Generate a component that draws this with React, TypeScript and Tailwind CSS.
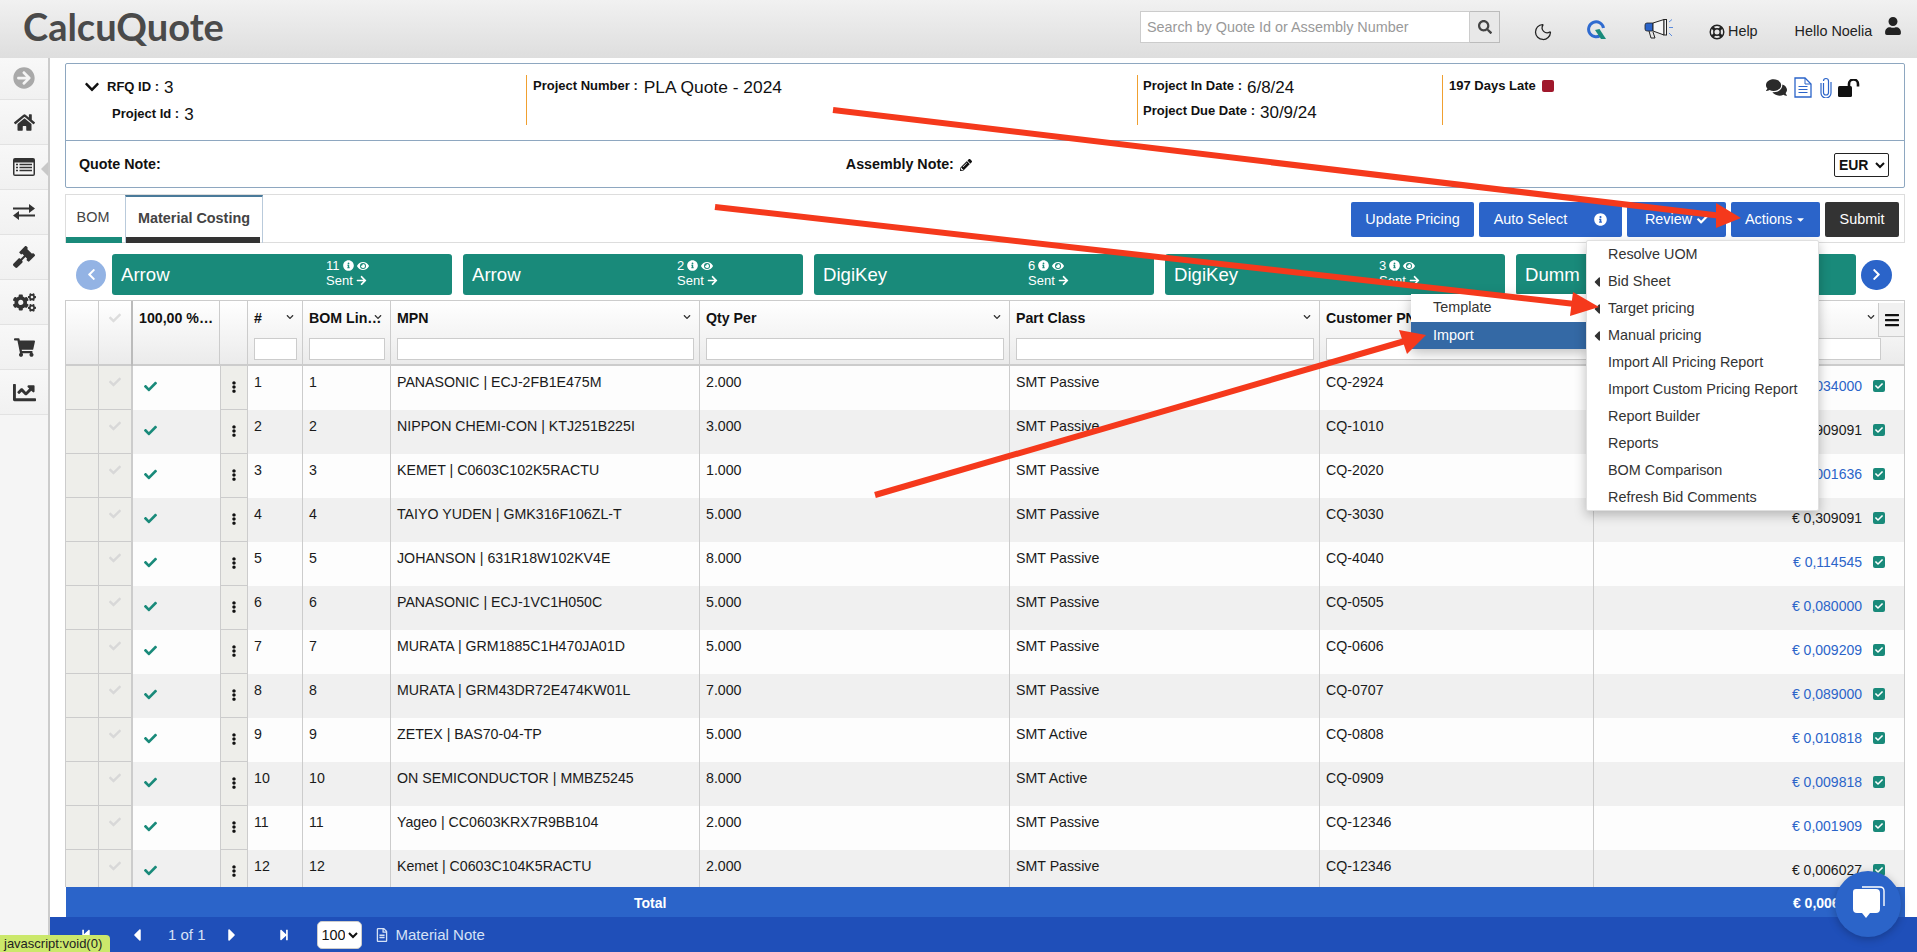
import { Moon } from 'lucide-react';
import {
  FaArrowCircleRight, FaArrowRight, FaBars, FaCaretDown, FaCaretLeft, FaCaretRight, FaChartLine, FaCheck,
  FaChevronDown, FaChevronLeft, FaChevronRight, FaCogs, FaComments, FaEllipsisV, FaEye, FaGavel, FaHome,
  FaInfoCircle, FaPencilAlt, FaRegFileAlt, FaSearch, FaShoppingCart, FaStepBackward, FaStepForward, FaUser,
} from 'react-icons/fa';

const rows = [
  ['PANASONIC | ECJ-2FB1E475M', '2.000', 'SMT Passive', 'CQ-2924', '€ 0,034000', true],
  ['NIPPON CHEMI-CON | KTJ251B225I', '3.000', 'SMT Passive', 'CQ-1010', '€ 0,909091', false],
  ['KEMET | C0603C102K5RACTU', '1.000', 'SMT Passive', 'CQ-2020', '€ 0,001636', true],
  ['TAIYO YUDEN | GMK316F106ZL-T', '5.000', 'SMT Passive', 'CQ-3030', '€ 0,309091', false],
  ['JOHANSON | 631R18W102KV4E', '8.000', 'SMT Passive', 'CQ-4040', '€ 0,114545', true],
  ['PANASONIC | ECJ-1VC1H050C', '5.000', 'SMT Passive', 'CQ-0505', '€ 0,080000', true],
  ['MURATA | GRM1885C1H470JA01D', '5.000', 'SMT Passive', 'CQ-0606', '€ 0,009209', true],
  ['MURATA | GRM43DR72E474KW01L', '7.000', 'SMT Passive', 'CQ-0707', '€ 0,089000', true],
  ['ZETEX | BAS70-04-TP', '5.000', 'SMT Active', 'CQ-0808', '€ 0,010818', true],
  ['ON SEMICONDUCTOR | MMBZ5245', '8.000', 'SMT Active', 'CQ-0909', '€ 0,009818', true],
  ['Yageo | CC0603KRX7R9BB104', '2.000', 'SMT Passive', 'CQ-12346', '€ 0,001909', true],
  ['Kemet | C0603C104K5RACTU', '2.000', 'SMT Passive', 'CQ-12346', '€ 0,006027', false],
] as const;

const cols = 'grid grid-cols-[33px_34px_87px_28px_55px_88px_309px_310px_310px_274px_310px]';

const menuItems: [string, boolean][] = [
  ['Resolve UOM', false],
  ['Bid Sheet', true],
  ['Target pricing', true],
  ['Manual pricing', true],
  ['Import All Pricing Report', false],
  ['Import Custom Pricing Report', false],
  ['Report Builder', false],
  ['Reports', false],
  ['BOM Comparison', false],
  ['Refresh Bid Comments', false],
];

const cards = [
  ['Arrow', '11'],
  ['Arrow', '2'],
  ['DigiKey', '6'],
  ['DigiKey', '3'],
  ['Dumm', ''],
];

function SideItem({ children, h = 'h-[45px]', active }: { children: React.ReactNode; h?: string; active?: boolean }) {
  return (
    <div className={`relative flex items-center justify-center border-b border-[#e2e2e2] bg-gradient-to-b from-[#f8f8f8] to-[#f1f1f1] text-[#333] ${h}`}>
      {children}
      {active && (
        <div className="absolute right-0 top-[17px] border-y-[7px] border-r-[7px] border-y-transparent border-r-[#c8c8c8]" />
      )}
    </div>
  );
}

function HeadCell({ label, filter = true, sort = true }: { label: string; filter?: boolean; sort?: boolean }) {
  return (
    <div className="relative h-[65px] border-r border-[#ccc] pl-[6px] pr-[5px] pt-[8px]">
      <div className="h-[18px] whitespace-nowrap text-[14.2px] font-bold leading-[18px] text-[#111]">{label}</div>
      {sort && <FaChevronDown className="absolute right-[8px] top-[12px] text-[8px] text-[#333]" />}
      {filter && <div className="mt-[11px] h-[22px] border border-[#ccc] bg-white" />}
    </div>
  );
}

function Btn({ children, w, dark }: { children: React.ReactNode; w: string; dark?: boolean }) {
  return (
    <div className={`flex h-[35px] items-center justify-center rounded-[2px] text-[14.4px] text-white ${w} ${dark ? 'bg-[#333]' : 'bg-[#2b64c9]'}`}>
      {children}
    </div>
  );
}

export default function App() {
  return (
    <div className="relative flex h-[952px] w-[1917px] flex-col overflow-hidden bg-white font-['Liberation_Sans',Arial,sans-serif] text-[#222]">
      {/* top bar */}
      <header className="flex h-[58px] shrink-0 items-center bg-gradient-to-b from-[#f1f1f1] to-[#dedede]">
        <div className="ml-[23px] mt-[-6px] w-[210px] font-['Lato',sans-serif] text-[38px] font-bold leading-none text-[#4a4a4a]">CalcuQuote</div>
        <div className="ml-[907px] mt-[-4px] flex h-[32px] w-[330px] items-center border border-[#ccc] bg-white pl-[6px] pt-[2px] text-[14.4px] text-[#999]">
          Search by Quote Id or Assembly Number
        </div>
        <div className="mt-[-4px] flex h-[32px] w-[30px] items-center justify-center border border-l-0 border-[#bbb] bg-[#e8e8e8] text-[14px] text-[#444]">
          <FaSearch />
        </div>
        <Moon className="ml-[33px] mt-[5px] h-[20px] w-[20px] text-[#222]" strokeWidth={1.5} />
        <svg className="ml-[32px] mt-[2px] h-[20px] w-[22px]" viewBox="0 0 22 20">
          <path d="M16.5 14.5 A7.5 7.5 0 1 1 18.5 8" fill="none" stroke="#2f6bd0" strokeWidth="3" />
          <path d="M10 10 L14.5 9 L21 19 L16 19 Z" fill="#198a7a" />
        </svg>
        <svg className="ml-[37px] mt-[1px] h-[22px] w-[29px]" viewBox="0 0 29 22">
          <path d="M1 6 Q1 4 3 4 H9 V12 H3 Q1 12 1 10 Z" fill="#2b64c9" stroke="#222" strokeWidth="0.8" />
          <path d="M9 4 L20 0.5 V16 L9 12 Z" fill="#f6f6f6" stroke="#222" strokeWidth="1" />
          <rect x="20" y="0.5" width="2.5" height="15.5" fill="#f6f6f6" stroke="#222" strokeWidth="1" />
          <path d="M5 12 L7 19 H11 L9 13" fill="none" stroke="#222" strokeWidth="1" />
          <path d="M25 3 L28 0.5 M25 8.5 H29 M25 14 L28 17" stroke="#5b8bdc" strokeWidth="1" />
        </svg>
        <svg className="ml-[36px] mt-[5px] h-[16px] w-[16px]" viewBox="0 0 16 16" fill="none" stroke="#222">
          <circle cx="8" cy="8" r="6.8" strokeWidth="1.4" />
          <circle cx="8" cy="8" r="3.2" strokeWidth="1.4" />
          <path d="M3.2 3.2L5.7 5.7M12.8 3.2L10.3 5.7M3.2 12.8L5.7 10.3M12.8 12.8L10.3 10.3" strokeWidth="3" />
        </svg>
        <span className="ml-[3px] mt-[5px] text-[14.4px] text-[#222]">Help</span>
        <span className="ml-[37px] mt-[5px] text-[14.4px] text-[#222]">Hello Noelia</span>
        <FaUser className="ml-[12px] mt-[-6px] text-[18px] text-[#222]" />
      </header>

      <div className="flex min-h-0 flex-1">
        {/* left rail */}
        <aside className="w-[50px] shrink-0 border-r-2 border-[#ccc] bg-[#f5f5f5]">
          <SideItem h="h-[42px]"><FaArrowCircleRight className="mb-[2px] text-[22px] text-[#a9a9a9]" /></SideItem>
          <SideItem><FaHome className="text-[21px]" /></SideItem>
          <SideItem active>
            <svg className="h-[18px] w-[22px]" viewBox="0 0 22 18">
              <rect width="22" height="18" rx="2" fill="#333" />
              <rect x="1.5" y="4.5" width="19" height="12" fill="#f4f4f4" />
              <path d="M3 6.5H5M3 9.5H5M3 12.5H5M6.5 6.5H19M6.5 9.5H19M6.5 12.5H19" stroke="#333" strokeWidth="1.6" />
            </svg>
          </SideItem>
          <SideItem>
            <svg className="h-[16px] w-[22px]" viewBox="0 0 22 16">
              <path d="M0 4.5H17M5 11.5H22" stroke="#333" strokeWidth="2.2" />
              <path d="M16 0L22 4.5L16 9ZM6 7L0 11.5L6 16Z" fill="#333" />
            </svg>
          </SideItem>
          <SideItem><FaGavel className="text-[22px]" /></SideItem>
          <SideItem><FaCogs className="text-[23px]" /></SideItem>
          <SideItem><FaShoppingCart className="text-[21px]" /></SideItem>
          <SideItem><FaChartLine className="text-[23px]" /></SideItem>
        </aside>

        <div className="flex min-w-0 flex-1 flex-col">
          <main className="min-h-0 flex-1 pl-[15px] pr-[12px] pt-[5px]">
            {/* project summary */}
            <section className="h-[125px] rounded-[2px] border border-[#8ea7c0] text-[#111]">
              <div className="flex h-[77px] border-b border-[#8ea7c0]">
                <div className="w-[460px] pl-[16px] pt-[13px] text-[13px] font-bold">
                  <div className="flex h-[20px] items-center">
                    <FaChevronDown className="ml-[2px] mr-[7px] text-[16px]" />
                    <span>RFQ ID :</span>
                    <span className="ml-[5px] mt-[1px] text-[17px] font-normal">3</span>
                  </div>
                  <div className="ml-[30px] mt-[7px] flex h-[20px] items-center">
                    <span>Project Id :</span>
                    <span className="ml-[5px] mt-[2px] text-[17px] font-normal">3</span>
                  </div>
                </div>
                <div className="mt-[11px] h-[50px] w-[611px] border-l border-[#f0a030] pl-[6px] pt-[1px] text-[13px] font-bold">
                  <div className="flex h-[20px] items-center">
                    <span>Project Number :</span>
                    <span className="ml-[6px] mt-[3px] text-[17.4px] font-normal">PLA Quote - 2024</span>
                  </div>
                </div>
                <div className="mt-[11px] h-[50px] w-[305px] border-l border-[#f0a030] pl-[5px] pt-[1px] text-[13px] font-bold">
                  <div className="flex h-[20px] items-center">
                    <span>Project In Date :</span>
                    <span className="ml-[5px] mt-[3px] text-[17px] font-normal">6/8/24</span>
                  </div>
                  <div className="mt-[5px] flex h-[20px] items-center">
                    <span>Project Due Date :</span>
                    <span className="ml-[5px] mt-[3px] text-[17px] font-normal">30/9/24</span>
                  </div>
                </div>
                <div className="mt-[11px] h-[50px] w-[324px] border-l border-[#f0a030] pl-[6px] pt-[1px] text-[13px] font-bold">
                  <div className="flex h-[20px] items-center">
                    <span>197 Days Late</span>
                    <span className="ml-[6px] h-[12px] w-[12px] rounded-[2px] bg-[#a0182c]" />
                  </div>
                </div>
                <div className="mt-[13px] flex h-[21px] items-center">
                  <FaComments className="text-[21px] text-[#2a2a2a]" />
                  <svg className="ml-[7px] h-[21px] w-[18px]" viewBox="0 0 18 21" fill="none" stroke="#2b64c9">
                    <path d="M1 1H11L17 7V20H1Z" strokeWidth="1.3" />
                    <path d="M11 1V7H17M4.5 9.5H13.5M4.5 12.5H13.5M4.5 15.5H13.5" strokeWidth="1" />
                  </svg>
                  <svg className="ml-[8px] h-[21px] w-[12px]" viewBox="0 0 12 21" fill="none" stroke="#2b64c9" strokeWidth="1.2">
                    <path d="M3.5 6V15.5A2.5 2.5 0 0 0 8.5 15.5V4A2.5 2.5 0 0 0 3.5 4M1 6V16A5 5 0 0 0 11 16V5" />
                  </svg>
                  <svg className="ml-[6px] h-[18px] w-[22px]" viewBox="0 0 22 18">
                    <rect x="0" y="7" width="14" height="11" rx="1.5" fill="#111" />
                    <path d="M11 7V5A4.5 4.5 0 0 1 20 5V7.5" fill="none" stroke="#111" strokeWidth="2.6" />
                  </svg>
                </div>
              </div>
              <div className="flex h-[46px] items-center pt-[1px] text-[14.3px] font-bold">
                <span className="ml-[13px]">Quote Note:</span>
                <span className="ml-[685px]">Assembly Note:</span>
                <FaPencilAlt className="ml-[6px] text-[12px]" />
                <select className="ml-[862px] h-[24px] w-[55px] rounded-[2px] border border-[#222] bg-white text-[14px] font-bold">
                  <option>EUR</option>
                </select>
              </div>
            </section>

            {/* tabs and actions */}
            <section className="mt-[6px] flex h-[49px] items-start border border-[#ddd]">
              <div className="relative h-[48px] w-[59px] pr-[5px] text-center text-[14.4px] leading-[44px] text-[#444]">
                BOM
                <div className="absolute bottom-0 left-0 right-[3px] h-[6px] bg-[#198a7a]" />
              </div>
              <div className="relative h-[48px] w-[138px] border-x border-t-2 border-x-[#b9cadb] border-t-[#4a7a9a] text-center text-[14.4px] font-bold leading-[42px] text-[#444]">
                Material Costing
                <div className="absolute bottom-0 left-0 right-[2px] h-[6px] bg-[#333]" />
              </div>
              <div className="ml-auto mr-[5px] mt-[7px] flex gap-[5px]">
                <Btn w="w-[123px]">Update Pricing</Btn>
                <Btn w="w-[143px]">
                  Auto Select
                  <FaInfoCircle className="ml-[27px] text-[13px]" />
                </Btn>
                <Btn w="w-[99px]">
                  Review
                  <FaCheck className="ml-[5px] text-[11px]" />
                </Btn>
                <Btn w="w-[89px]">
                  Actions
                  <FaCaretDown className="ml-[3px] text-[11px]" />
                </Btn>
                <Btn w="w-[74px]" dark>Submit</Btn>
              </div>
            </section>

            {/* supplier cards */}
            <section className="mt-[11px] flex h-[41px] items-center pl-[11px]">
              <div className="mr-[6px] flex h-[30px] w-[30px] items-center justify-center rounded-full bg-[#93b3e4] text-[13px] text-white">
                <FaChevronLeft />
              </div>
              <div className="flex gap-[11px]">
                {cards.map(([name, count], i) => (
                  <div key={i} className="flex h-[41px] w-[340px] items-center rounded-[3px] bg-[#198a7a] pl-[9px] text-white">
                    <span className="w-[205px] text-[18.6px]">{name}</span>
                    {count && (
                      <div className="mt-[-3px] text-[13px] leading-[15px]">
                        <div className="flex items-center gap-[3px]">
                          {count}
                          <FaInfoCircle className="text-[11px]" />
                          <FaEye className="text-[12px]" />
                        </div>
                        <div className="flex items-center gap-[3px]">
                          Sent
                          <FaArrowRight className="text-[11px]" />
                        </div>
                      </div>
                    )}
                  </div>
                ))}
              </div>
              <div className="ml-[5px] flex h-[30px] w-[31px] items-center justify-center rounded-full bg-[#2b64c9] text-[13px] text-white">
                <FaChevronRight />
              </div>
            </section>

            {/* grid */}
            <section className="mt-[5px] h-[587px] overflow-hidden border-x border-[#ccc]">
              <div className={`${cols} h-[66px] border-b-2 border-t border-[#ccc] bg-gradient-to-b from-white to-[#ebebeb]`}>
                <div className="border-r border-[#ccc]" />
                <div className="flex justify-center border-r-2 border-[#bbb] pt-[11px] text-[12px] text-[#ddd]"><FaCheck /></div>
                <HeadCell label="100,00 %…" filter={false} sort={false} />
                <div className="border-r border-[#ccc]" />
                <HeadCell label="#" />
                <HeadCell label="BOM Lin…" />
                <HeadCell label="MPN" />
                <HeadCell label="Qty Per" />
                <HeadCell label="Part Class" />
                <HeadCell label="Customer PN" />
                <div className="relative pl-[6px] pr-[23px] pt-[37px]">
                  <div className="h-[22px] border border-[#ccc] bg-white" />
                  <FaChevronDown className="absolute right-[29px] top-[12px] text-[8px] text-[#333]" />
                  <div className="absolute right-0 top-[2px] flex h-[34px] w-[26px] items-center justify-center border-b border-l border-[#ccc] bg-[#f1f1f1] text-[16px] text-[#111]">
                    <FaBars />
                  </div>
                </div>
              </div>
              {rows.map((r, i) => (
                <div key={i} className={`${cols} h-[44px] text-[14.2px] leading-[17px] text-[#1a1a1a] ${i % 2 ? 'bg-[#f0f0f0]' : 'bg-[#fdfdfd]'}`}>
                  <div className="border-b border-r border-[#ccc] bg-[#eeeeea]" />
                  <div className="flex justify-center border-b border-r-2 border-[#ccc] bg-[#eeeeea] pt-[10px] text-[12px] text-[#d8d8d8]"><FaCheck /></div>
                  <div className="pl-[11px] pt-[14px] text-[13px] text-[#198a7a]"><FaCheck /></div>
                  <div className="flex justify-center border-x border-b border-[#ccc] bg-[#eeeeea] pt-[15px] text-[12px] text-[#111]"><FaEllipsisV /></div>
                  <div className="border-r border-[#ccc] pl-[6px] pt-[8px]">{i + 1}</div>
                  <div className="border-r border-[#ccc] pl-[6px] pt-[8px]">{i + 1}</div>
                  <div className="truncate border-r border-[#ccc] pl-[6px] pt-[8px]">{r[0]}</div>
                  <div className="border-r border-[#ccc] pl-[6px] pt-[8px]">{r[1]}</div>
                  <div className="border-r border-[#ccc] pl-[6px] pt-[8px]">{r[2]}</div>
                  <div className="border-r border-[#ccc] pl-[6px] pt-[8px]">{r[3]}</div>
                  <div className="flex items-start justify-end pr-[19px] pt-[12px] text-[14px]">
                    <span className={r[5] ? 'text-[#2b64c9]' : 'text-[#1a1a1a]'}>{r[4]}</span>
                    <span className="ml-[11px] mt-[2px] flex h-[12px] w-[12px] items-center justify-center rounded-[2px] bg-[#198a7a] text-[8px] text-white"><FaCheck /></span>
                  </div>
                </div>
              ))}
            </section>
            <div className="ml-px flex h-[30px] items-center justify-between bg-[#2b64c9] pl-[568px] pr-[42px] pt-[2px] text-[14px] font-bold text-white">
              <span>Total</span>
              <span>€ 0,006027</span>
            </div>
          </main>

          {/* pager */}
          <footer className="flex h-[35px] shrink-0 items-center bg-[#1f4fb9] pt-[1px] text-[15px] text-[#d6e2f6]">
            <FaStepBackward className="ml-[30px] text-[12px] text-white" />
            <FaCaretLeft className="ml-[35px] text-[20px] text-white" />
            <span className="ml-[21px]">1 of 1</span>
            <FaCaretRight className="ml-[16px] text-[20px] text-white" />
            <FaStepForward className="ml-[36px] text-[12px] text-white" />
            <select className="ml-[27px] h-[28px] w-[45px] rounded-[5px] border border-[#ccc] bg-white text-[14.4px] text-[#111]">
              <option>100</option>
            </select>
            <FaRegFileAlt className="ml-[13px] text-[14px]" />
            <span className="ml-[7px]">Material Note</span>
          </footer>
        </div>
      </div>

      {/* Actions menu, open */}
      <div className="absolute left-[1411px] top-[294px] h-[55px] w-[176px] bg-white text-[14.4px] text-[#333] shadow-[0_4px_12px_rgba(0,0,0,0.25)]">
        <div className="flex h-[28px] items-center pl-[22px]">Template</div>
        <div className="flex h-[27px] items-center bg-[#3469a5] pl-[22px] text-white">Import</div>
      </div>
      <div className="absolute left-[1586px] top-[240px] h-[271px] w-[233px] rounded-[2px] border border-[#e0e0e0] bg-white text-[14.4px] text-[#333] shadow-[0_4px_12px_rgba(0,0,0,0.25)]">
        {menuItems.map(([label, sub]) => (
          <div key={label} className="relative flex h-[27px] items-center pl-[21px]">
            {sub && <FaCaretLeft className="absolute left-[2px] text-[16px]" />}
            {label}
          </div>
        ))}
      </div>

      {/* annotation arrows */}
      <svg className="pointer-events-none absolute left-0 top-0 h-[952px] w-[1917px]" viewBox="0 0 1917 952">
        <line x1="833" y1="110" x2="1722" y2="216" stroke="#f5391c" strokeWidth="6" />
        <polygon points="1741,218 1716,203 1716,228" fill="#f5391c" />
        <line x1="715" y1="207" x2="1575" y2="304" stroke="#f5391c" strokeWidth="6" />
        <polygon points="1599,307 1573,292 1570,316" fill="#f5391c" />
        <line x1="875" y1="495" x2="1405" y2="341" stroke="#f5391c" strokeWidth="6" />
        <polygon points="1426,335 1399,330 1407,354" fill="#f5391c" />
      </svg>

      {/* chat widget */}
      <div className="absolute left-[1835px] top-[871px] flex h-[66px] w-[66px] items-center justify-center rounded-full bg-[#2b64c9] shadow-[0_2px_8px_rgba(0,0,0,0.25)]">
        <svg className="h-[36px] w-[36px]" viewBox="0 0 36 36">
          <path d="M3 6 Q3 3 6 3 H26 Q30 3 30 7 V23 Q30 27 26 27 H20 L16 32 L12 27 H7 Q3 27 3 23 Z" fill="#fff" />
          <path d="M12 1 H30 Q34 1 34 5 V20" fill="none" stroke="#fff" strokeWidth="1.4" />
        </svg>
      </div>

      {/* link status */}
      <div className="absolute bottom-0 left-0 flex h-[17px] w-[110px] items-center rounded-tr-[4px] bg-[#cbe86b] pl-[4px] text-[13px] text-[#222]">
        javascript:void(0)
      </div>
    </div>
  );
}
